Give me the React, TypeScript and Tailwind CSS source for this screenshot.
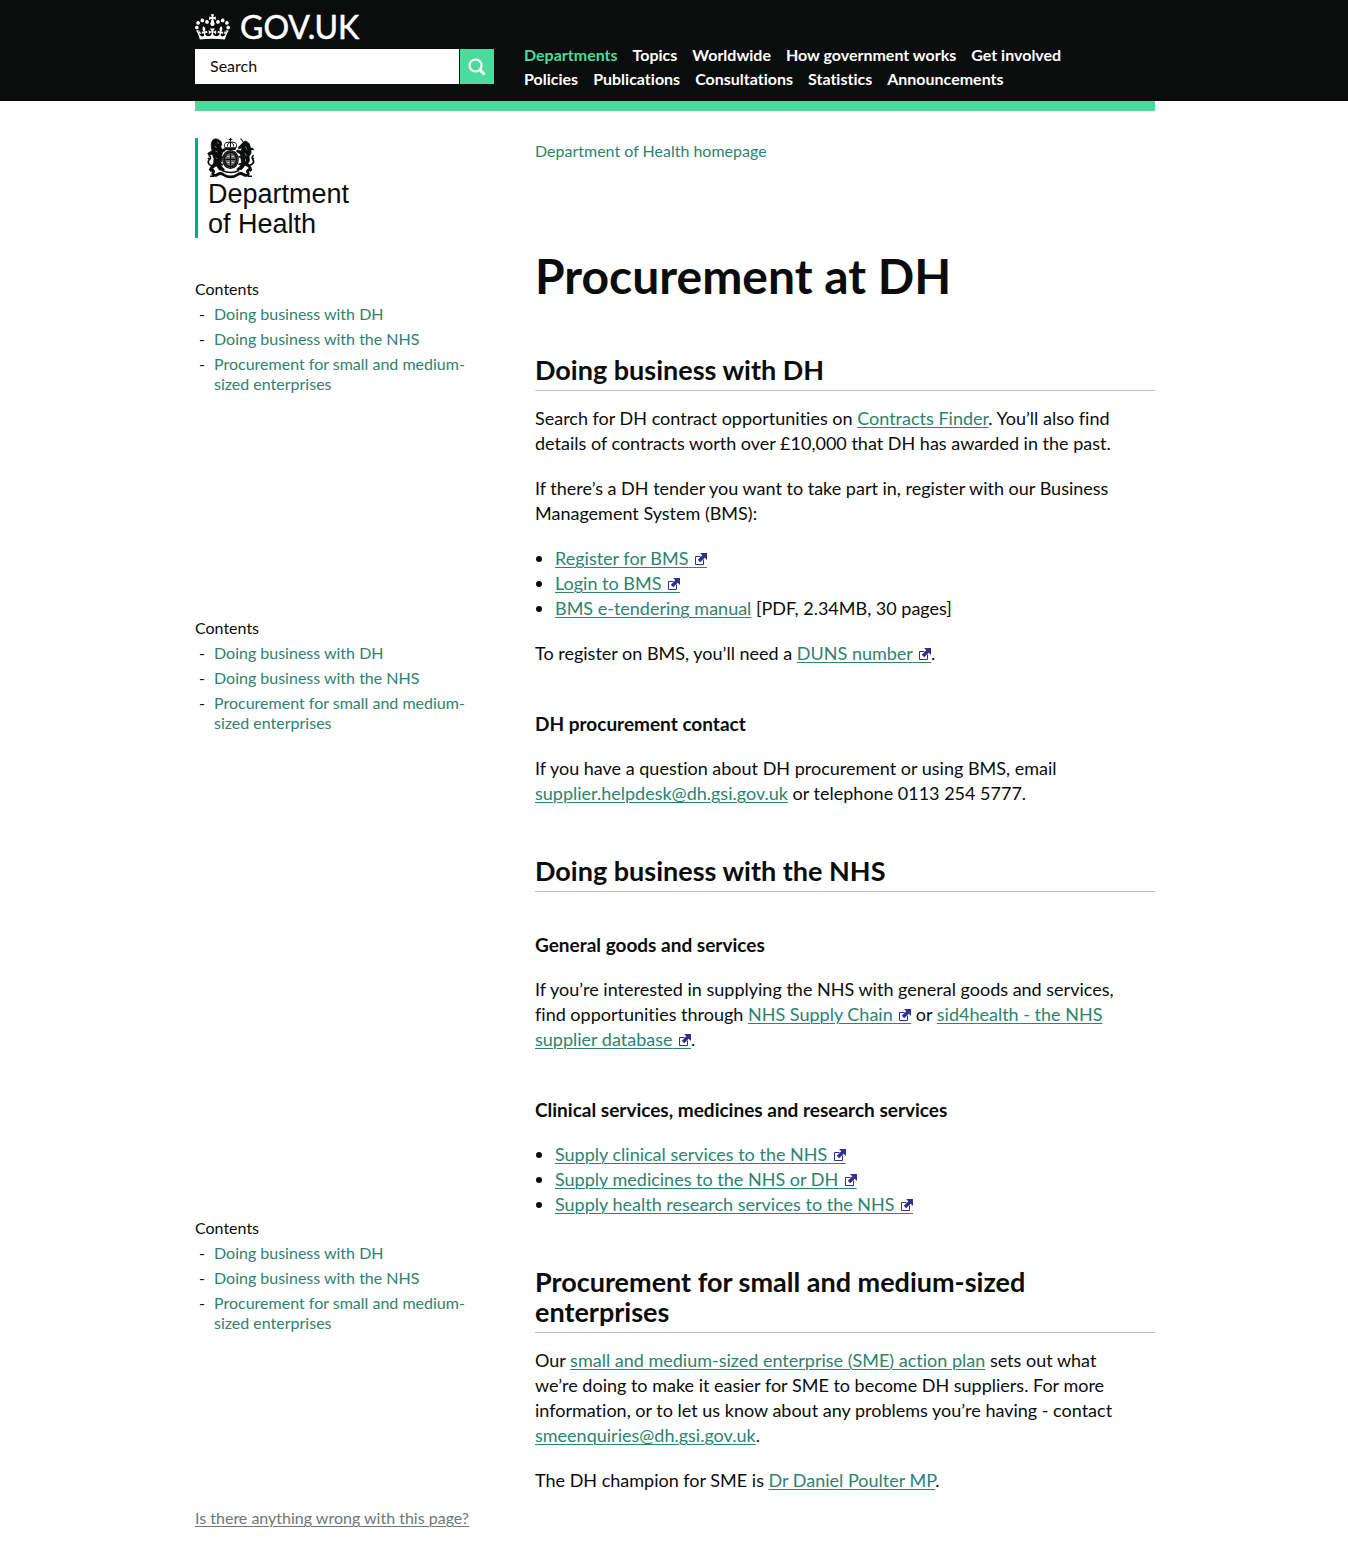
import type { ReactNode } from "react";

const crownPath =
  "M25 30.2c3.5 1.5 7.7-.2 9.1-3.7 1.5-3.6-.2-7.8-3.9-9.2-3.6-1.4-7.6.3-9.1 3.9-1.4 3.5.3 7.5 3.9 9zM9 39.5c3.6 1.5 7.8-.2 9.2-3.7 1.5-3.6-.2-7.8-3.9-9.1-3.6-1.5-7.6.2-9.1 3.8-1.4 3.5.3 7.5 3.8 9zM4.4 57.2c3.5 1.5 7.7-.2 9.1-3.8 1.5-3.6-.2-7.7-3.9-9.1-3.5-1.5-7.6.3-9.1 3.8-1.4 3.5.3 7.6 3.9 9.1zm38.3-21.4c3.5 1.5 7.7-.2 9.1-3.8 1.5-3.6-.2-7.7-3.9-9.1-3.6-1.5-7.6.3-9.1 3.8-1.3 3.6.4 7.7 3.9 9.1zm64.4-5.6c-3.6 1.5-7.8-.2-9.1-3.7-1.5-3.6.2-7.8 3.8-9.2 3.6-1.4 7.7.3 9.2 3.9 1.3 3.5-.4 7.5-3.9 9zm15.9 9.3c-3.6 1.5-7.7-.2-9.1-3.7-1.5-3.6.2-7.8 3.7-9.1 3.6-1.5 7.7.2 9.2 3.8 1.5 3.5-.3 7.5-3.8 9zm4.7 17.7c-3.6 1.5-7.8-.2-9.2-3.8-1.5-3.6.2-7.7 3.9-9.1 3.6-1.5 7.7.3 9.2 3.8 1.3 3.5-.4 7.6-3.9 9.1zM89.3 35.8c-3.6 1.5-7.8-.2-9.2-3.8-1.4-3.6.2-7.7 3.9-9.1 3.6-1.5 7.7.3 9.2 3.8 1.4 3.6-.3 7.7-3.9 9.1zM69.7 17.7l8.9 4.7V9.3l-8.9 2.8c-.2-.3-.5-.6-.9-.9L72.4 0H59.6l3.5 11.2c-.3.3-.6.5-.9.9l-8.8-2.8v13.1l8.8-4.7c.3.3.6.7.9.9l-5 15.4v.1c-.2.8-.4 1.6-.4 2.4 0 4.1 3.1 7.5 7 8.1h.2c.3 0 .7.1 1 .1.4 0 .7 0 1-.1h.2c4-.6 7.1-4.1 7.1-8.1 0-.8-.1-1.7-.4-2.4V34l-5.1-15.4c.4-.2.7-.6 1-.9zM66 92.8c16.9 0 32.8 1.1 47.1 3.2 4-16.9 8.9-26.7 14-33.5l-9.6-3.4c1 4.9 1.1 7.2 0 10.2-1.5-1.4-3-4.3-4.2-8.7L108.6 76c2.8-2 5-3.2 7.5-3.3-4.4 9.4-10 11.9-13.6 11.2-4.3-.8-6.3-4.6-5.6-7.9 1-4.7 5.7-5.9 8-.5 4.3-8.7-3-11.4-7.6-8.8 7.1-7.2 7.9-13.5 2.1-21.1-8 6.1-8.1 12.3-4.5 20.8-4.7-5.4-12.1-2.5-9.5 6.2 3.4-5.2 7.9-2 7.2 3.1-.6 4.3-6.4 7.8-13.5 7.2-10.3-.9-10.9-8-11.2-13.8 2.5-.5 7.1 1.8 11 7.3L80.2 60c-4.1 4.4-8 5.3-12.3 5.4 1.4-4.4 8-11.6 8-11.6H55.5s6.4 7.2 7.9 11.6c-4.2-.1-8-1-12.3-5.4l1.4 16.4c3.9-5.5 8.5-7.7 10.9-7.3-.3 5.8-.9 12.8-11.1 13.8-7.2.6-12.9-2.9-13.5-7.2-.7-5 3.8-8.3 7.1-3.1 2.7-8.7-4.6-11.6-9.4-6.2 3.7-8.5 3.6-14.7-4.6-20.8-5.8 7.6-5 13.9 2.2 21.1-4.7-2.6-11.9.1-7.7 8.8 2.3-5.5 7.1-4.2 8.1.5.7 3.3-1.3 7.1-5.7 7.9-3.5.7-9-1.8-13.5-11.2 2.5.1 4.7 1.3 7.5 3.3l-4.7-15.4c-1.2 4.4-2.7 7.2-4.3 8.7-1.1-3-.9-5.3 0-10.2l-9.5 3.4c5 6.9 9.9 16.7 14 33.5 14.8-2.1 30.8-3.2 47.7-3.2z";

function Crown() {
  return (
    <svg viewBox="0 0 132 97" className="h-[26px] w-[35px]" fill="currentColor" aria-hidden="true">
      <path d={crownPath} />
    </svg>
  );
}

function Crest() {
  return (
    <svg viewBox="0 0 48 41" className="h-[41px] w-12" fill="none" stroke="#0b0c0c" aria-hidden="true">
      {/* royal crown */}
      <path d="M23.5 0v3.500M21.800 1.500h3.400" strokeWidth="1.200" />
      <path d="M18.6 10.5c-2.6-4.2-.6-6.800 4.900-6.300 5.500-.5 7.500 2.100 4.900 6.300M23.500 4v5M20.500 8.500c-.4-2 .4-3.400 3-4.300 2.600.9 3.400 2.300 3 4.300" strokeWidth="1" />
      <path d="M18 9.200h11l-.5 2.800h-10z" fill="#0b0c0c" stroke="none" />
      {/* shield and garter */}
      <ellipse cx="23.5" cy="21.500" rx="6.800" ry="8" strokeWidth="3" fill="#666" />
      <ellipse cx="23.5" cy="21.500" rx="6.900" ry="8.100" strokeWidth=".5" stroke="#bbb" strokeDasharray="1 1" />
      <path d="M23.500 15.500v12M18.500 21.500h10" strokeWidth="1" />
      <path d="M20.500 18.500h2M24.800 18.500h2M20.500 24.500h2M24.800 24.500h2" strokeWidth="1" stroke="#ddd" />
      {/* lion */}
      <path
        d="M6 1.800 8.500.8l3 .6 2.500 2 .8 3.100-1.200 2.300 1.700 2.600 2.700-.9.700 1.700-3.200 2.300-.8 3.500.2 5-1.700 2.500 1.800 3.500 2.500 2.200-1 1.300-4.200-.5-3-4.200-4.200 3.300.5 2.400-2.400-.9-.3-2.600 3.700-4.800.4-4.600-1.700-4.300-3.700.9-.9-1.900 4.400-2.600-.9-3.400.2-4.900z"
        fill="#0b0c0c"
        strokeWidth=".7"
      />
      <path d="M5 28C.8 26.500.4 23.500 2.500 21.500c1.700-1.500 1-3.500-.8-3.800M2.500 21.500 1 20M12 20.500l4-1.500M12.500 25l3.500 2" strokeWidth="1.700" />
      <path d="M10 4.500l2 1M7.500 8l2 1.500M8.500 13l2 1M9 19.500l1.500 1.500" stroke="#ccc" strokeWidth=".6" />
      {/* unicorn */}
      <path d="M33.500.5 37.800 6" strokeWidth="1.100" />
      <path
        d="M37 3.500 39 3l3.200 2.500 1.500 4.500.4 5-2 3.500.5 4-1.500 3 2.800 3.300.8 3.400-2.400-.6-.7-2.400-3.600-2-3 4-4.200 1-1-1.300 3.200-2.400 1.500-4-.6-4.500-.5-4-4.200-2.500 1-1.600 3.600 1 1.500-3.200-3.300 1.300-.8-1.500z"
        fill="#0b0c0c"
        strokeWidth=".7"
      />
      <path d="M42 27.500c4-1 5.500-3 4-5.500-1.300-2.200-1-4 .8-4.500M44.500 20l2.500.5M41.500 13l3.500-2.500 1.500 1.500M35.500 20 31.500 18.500M35.500 25 31.500 26.500" strokeWidth="1.700" />
      <path d="M38.500 8.500l1.500 3M38 15l1.500 3M38.500 21v2.500" stroke="#ccc" strokeWidth=".6" />
      {/* motto ribbon */}
      <path d="M2.500 32.500c3-1.800 5 .3 3.500 2.500-1 1.800 1.500 3.500 4.500 1.500 2.500-1.700 4.500-1.300 6.500.5 3.500 2.600 9.500 2.600 13 0 2-1.800 4-2.200 6.500-.5 3 2 5.500.3 4.500-1.500-1.500-2.200.5-4.300 3.500-2.500" strokeWidth="2.800" />
      <path d="M3 38.200h4M41 38.200h4M15 32.500c5.500 2.500 11.500 2.500 17 0" strokeWidth="1.600" />
    </svg>
  );
}

function ExternalIcon() {
  return (
    <span className="relative">
      {"\u00a0\u00a0\u00a0\u00a0"}
      <svg viewBox="0 0 12 12" className="absolute right-0 bottom-1 h-3 w-3" fill="none" aria-hidden="true">
        <path d="M5.500 3.500h-5v8h8v-5" stroke="#2e3191" />
        <path d="M5 0h7v7L9.700 4.700 5.200 9.200 2.800 6.800l4.500-4.500z" fill="#2e3191" />
      </svg>
    </span>
  );
}

function A({ children, external }: { children: ReactNode; external?: boolean }) {
  return (
    <a href="#" className="text-[#2e8270] underline decoration-1 underline-offset-2">
      {children}
      {external && <ExternalIcon />}
    </a>
  );
}

function Contents({ className }: { className: string }) {
  return (
    <nav aria-label="Contents" className={className}>
      <p>Contents</p>
      <ol>
        {["Doing business with DH", "Doing business with the NHS", "Procurement for small and medium-sized enterprises"].map((t) => (
          <li key={t} className="mt-[5px] flex">
            <span className="w-[19px] shrink-0 pl-1">-</span>
            <a href="#" className="text-[#2e8270]">{t}</a>
          </li>
        ))}
      </ol>
    </nav>
  );
}

function P({ children, className = "mt-5" }: { children: ReactNode; className?: string }) {
  return <p className={`max-w-[600px] ${className}`}>{children}</p>;
}

function H2({ children, className }: { children: ReactNode; className: string }) {
  return (
    <h2 className={`border-b border-[#bfc1c3] pb-[5px] text-[27px] leading-[30px] font-bold ${className}`}>{children}</h2>
  );
}

function H3({ children, className }: { children: ReactNode; className: string }) {
  return <h3 className={`text-[19px] leading-[25px] font-bold ${className}`}>{children}</h3>;
}

const navRows = [
  ["Departments", "Topics", "Worldwide", "How government works", "Get involved"],
  ["Policies", "Publications", "Consultations", "Statistics", "Announcements"],
];

export default function App() {
  return (
    <div className="bg-white pb-[27px] font-['Lato',sans-serif] text-[#0b0c0c] [font-variant-ligatures:none]">
      <header className="bg-[#0b0c0c] pl-0.5 text-white">
        <div className="mx-auto flex max-w-[960px] items-end pt-[11px] pb-2.5">
          <div className="w-[329px] shrink-0">
            <a href="#" aria-label="GOV.UK" className="flex h-[31px] items-center gap-2.5">
              <Crown />
              <span className="text-[32px] leading-[31px] [-webkit-text-stroke:0.5px_white]">GOV.UK</span>
            </a>
            <form className="my-[7px] flex h-[35px] w-[299px] gap-px" onSubmit={(e) => e.preventDefault()}>
              <input
                aria-label="Search"
                defaultValue="Search"
                className="min-w-0 flex-1 bg-white px-[15px] pb-0.5 text-base text-[#0b0c0c] outline-none"
              />
              <button type="submit" aria-label="Submit search" className="flex w-[34px] items-center justify-center bg-[#4bdb9d]">
                <svg viewBox="0 0 18 18" className="h-[18px] w-[18px]" fill="none" stroke="#fff" aria-hidden="true">
                  <circle cx="7.5" cy="7.5" r="6" strokeWidth="2.2" />
                  <path d="m12 12 4.500 4.500" strokeWidth="3" />
                </svg>
              </button>
            </form>
          </div>
          <nav aria-label="Main" className="text-base leading-6 font-bold">
            {navRows.map((row) => (
              <ul key={row[0]} className="flex gap-[15px]">
                {row.map((t) => (
                  <li key={t}>
                    <a href="#" className={t === "Departments" ? "text-[#4bdb9d]" : "text-white"}>{t}</a>
                  </li>
                ))}
              </ul>
            ))}
          </nav>
        </div>
      </header>
      <div className="pl-0.5">
        <div className="mx-auto max-w-[960px]">
          <div className="h-2.5 bg-[#4bdb9d]" />
          <div className="mt-[27px] flex">
            <div className="w-[340px] shrink-0 text-base leading-5">
              <a href="#" className="block h-[100px] border-l-[3px] border-[#00ad93] pl-[9px]">
                <Crest />
                <span className="block pl-px font-['Liberation_Sans',sans-serif] text-[27px] leading-[30px]">
                  Department
                  <br />
                  of Health
                </span>
              </a>
              <div className="w-[270px]">
                <Contents className="mt-[41px]" />
                <Contents className="mt-[224px]" />
                <Contents className="mt-[485px]" />
              </div>
            </div>
            <main className="min-w-0 flex-1 text-lg leading-[25px]">
              <a href="#" className="mt-[3px] block text-base leading-5 text-[#2e8270]">Department of Health homepage</a>
              <h1 className="mt-[90px] text-5xl leading-[50px] font-bold">Procurement at DH</h1>

              <H2 className="mt-[54px]">Doing business with DH</H2>
              <P className="mt-[15px]">
                Search for DH contract opportunities on <A>Contracts Finder</A>. You’ll also find details of contracts
                worth over £10,000 that DH has awarded in the past.
              </P>
              <P>
                If there’s a DH tender you want to take part in, register with our Business Management System (BMS):
              </P>
              <ul className="mt-5 list-disc pl-5">
                <li><A external>Register for BMS</A></li>
                <li><A external>Login to BMS</A></li>
                <li><A>BMS e-tendering manual</A> [PDF, 2.34MB, 30 pages]</li>
              </ul>
              <P>
                To register on BMS, you’ll need a <A external>DUNS number</A>.
              </P>
              <H3 className="mt-[45px]">DH procurement contact</H3>
              <P>
                If you have a question about DH procurement or using BMS, email <A>supplier.helpdesk@dh.gsi.gov.uk</A> or
                telephone 0113 254 5777.
              </P>

              <H2 className="mt-[50px]">Doing business with the NHS</H2>
              <H3 className="mt-10">General goods and services</H3>
              <P>
                If you’re interested in supplying the NHS with general goods and services, find opportunities through{" "}
                <A external>NHS Supply Chain</A> or <A external>sid4health - the NHS supplier database</A>.
              </P>
              <H3 className="mt-[45px]">Clinical services, medicines and research services</H3>
              <ul className="mt-5 list-disc pl-5">
                <li><A external>Supply clinical services to the NHS</A></li>
                <li><A external>Supply medicines to the NHS or DH</A></li>
                <li><A external>Supply health research services to the NHS</A></li>
              </ul>

              <H2 className="mt-[50px]">Procurement for small and medium-sized enterprises</H2>
              <P className="mt-[15px]">
                Our <A>small and medium-sized enterprise (SME) action plan</A> sets out what we’re doing to make it
                easier for SME to become DH suppliers. For more information, or to let us know about any problems you’re
                having - contact <A>smeenquiries@dh.gsi.gov.uk</A>.
              </P>
              <P>
                The DH champion for SME is <A>Dr Daniel Poulter MP</A>.
              </P>
            </main>
          </div>
          <footer className="mt-[15px] text-base leading-5">
            <a href="#" className="text-[#6f777b] underline decoration-1 underline-offset-2">Is there anything wrong with this page?</a>
          </footer>
        </div>
      </div>
    </div>
  );
}
